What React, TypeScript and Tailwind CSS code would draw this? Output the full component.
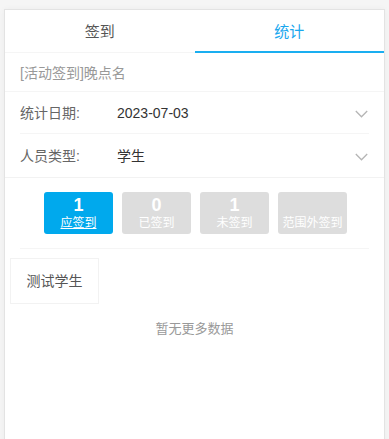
import React from "react";

const font = { fontFamily: '"Liberation Sans", "Noto Sans CJK SC", sans-serif' };

function Chevron() {
  return (
    <svg width="13" height="8" viewBox="0 0 13 8" fill="none">
      <path d="M0.8 1 L6.5 6.8 L12.2 1" stroke="#b5b5b5" strokeWidth="1.3" />
    </svg>
  );
}

function Stat({ n, label, active }: { n: string; label: string; active?: boolean }) {
  return (
    <div
      className={`w-[69px] h-[42px] rounded-[3px] flex flex-col items-center justify-center text-white ${
        active ? "bg-[#00a9ed]" : "bg-[#dddddd]"
      }`}
    >
      <div className="text-[18px] font-bold leading-[19px] h-[19px]">{n}</div>
      <div className={`text-[12px] leading-[16px] ${active ? "underline" : ""}`}>{label}</div>
    </div>
  );
}

export default function App() {
  return (
    <div className="h-[439px] bg-[#f5f5f5] pt-[9px] px-[4px] overflow-hidden" style={font}>
      <div className="h-[440px] bg-white border border-[#e3e3e3] shadow-[0_0_6px_rgba(0,0,0,0.04)]">
        <div className="flex h-[43px] border-b border-[#f5f5f5]">
          <div className="flex-1 flex items-center justify-center text-[15px] text-[#555] pt-[3px]">签到</div>
          <div className="flex-1 flex items-center justify-center text-[15px] text-[#1aa7ee] border-b-2 border-[#1aaef0] mb-[-1px] pt-[4px]">
            统计
          </div>
        </div>
        <div className="h-[39px] flex items-center pl-[15px] pt-[2px] text-[14px] text-[#999] border-b border-[#f5f5f5]">
          [活动签到]晚点名
        </div>
        <div className="px-[15px]">
          <div className="h-[42px] flex items-center pt-[2px] border-b border-[#f5f5f5]">
            <span className="w-[97px] text-[14px] text-[#666]">统计日期:</span>
            <span className="flex-1 text-[14px] text-[#333]">2023-07-03</span>
            <span className="mr-[1px]"><Chevron /></span>
          </div>
          <div className="h-[43px] flex items-center pt-[2px]">
            <span className="w-[97px] text-[14px] text-[#666]">人员类型:</span>
            <span className="flex-1 text-[14px] text-[#333]">学生</span>
            <span className="mr-[1px]"><Chevron /></span>
          </div>
        </div>
        <div className="border-t border-[#f2f2f2]" />
        <div className="pt-[14px] flex justify-center gap-[9px] pl-[2px]">
          <Stat n="1" label="应签到" active />
          <Stat n="0" label="已签到" />
          <Stat n="1" label="未签到" />
          <Stat n="" label="范围外签到" />
        </div>
        <div className="mx-[15px] mt-[14px] border-t border-[#f5f5f5]" />
        <div className="pl-[5px] pt-[9px]">
          <div className="w-[89px] h-[46px] border border-[#f2f2f2] flex items-center justify-center text-[14px] text-[#555]">
            测试学生
          </div>
        </div>
        <div className="mt-[15px] text-center text-[13px] text-[#999]">暂无更多数据</div>
      </div>
    </div>
  );
}
